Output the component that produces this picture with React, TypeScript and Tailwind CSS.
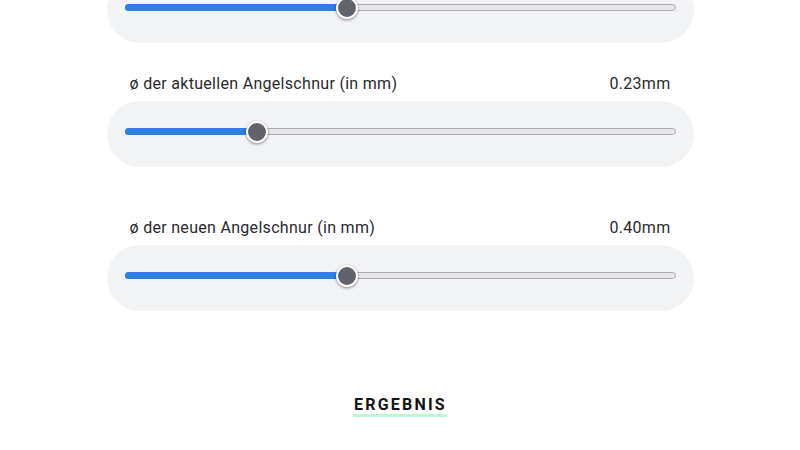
import React from 'react';

type SliderProps = { label?: string; value: number; unit?: string };

function Slider({ value }: { value: number }) {
  // thumb is 22px wide, track spans the card minus 18px each side
  const pct = value;
  return (
    <div className="h-[66px] rounded-full bg-[#f2f3f5] px-[18px] pt-[27px]">
      <div className="relative h-[7px]">
        <div className="absolute inset-0 rounded-full border border-[#a9a9b0] bg-[#e6e6ea]" />
        <div
          className="absolute left-0 top-0 h-[7px] rounded-full bg-[#2f7fe0]"
          style={{ width: `calc(11px + (100% - 22px) * ${pct})` }}
        />
        <div
          className="absolute top-1/2 h-[22px] w-[22px] -translate-y-1/2 rounded-full border-2 border-white bg-[#62626d] shadow-[0_1px_3px_rgba(0,0,0,0.45)]"
          style={{ left: `calc((100% - 22px) * ${pct})` }}
        />
      </div>
    </div>
  );
}

function Field({ label, value, unit }: SliderProps) {
  return (
    <div>
      <div className="flex items-center justify-between px-[23px] text-[16px] leading-6 tracking-[0.3px] text-[#2a2a2e]">
        <span>{label}</span>
        <span>{value.toFixed(2)}{unit}</span>
      </div>
      <div className="mt-[5px]">
        <Slider value={value} />
      </div>
    </div>
  );
}

export default function App() {
  return (
    <div className="h-[450px] w-[800px] overflow-hidden bg-white font-['Roboto',sans-serif]">
      <div className="mx-auto -mt-[23px] w-[587px]">
        <Slider value={0.4} />
        <div className="mt-[29px]">
          <Field label="ø der aktuellen Angelschnur (in mm)" value={0.23} unit="mm" />
        </div>
        <div className="mt-[49px]">
          <Field label="ø der neuen Angelschnur (in mm)" value={0.4} unit="mm" />
        </div>
        <div className="mt-[84px] flex justify-center">
          <span className="border-b-[3px] border-[#bdf5d5] pl-[1px] text-[16px] font-bold leading-[19px] tracking-[2.2px] text-[#141414]">
            ERGEBNIS
          </span>
        </div>
      </div>
    </div>
  );
}
